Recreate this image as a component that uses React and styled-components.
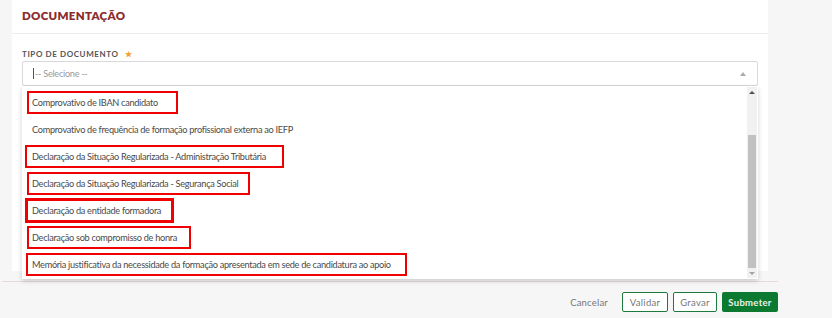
import React from "react";
import styled, { createGlobalStyle } from "styled-components";

const Global = createGlobalStyle`
  html, body { margin: 0; padding: 0; background: #f6f6f6; }
  body { font-family: Lato, "Open Sans", sans-serif; width: 832px; height: 318px; overflow: hidden; }
`;

const Page = styled.div`
  width: 832px;
  height: 318px;
  display: flex;
  flex-direction: column;
  background: #f6f6f6;
`;

const CardRow = styled.div`
  display: flex;
  padding-left: 12px;
`;

const Card = styled.section`
  width: 756px;
  height: 271px;
  background: #fff;
  display: flex;
  flex-direction: column;
`;

const CardHeader = styled.header`
  height: 33px;
  border-bottom: 1px solid #ececec;
  display: flex;
  align-items: center;
  padding-left: 10px;
  box-sizing: content-box;
`;

const Title = styled.h2`
  margin: 0;
  font-size: 11.5px;
  font-weight: 800;
  letter-spacing: 0.3px;
  color: #8a2c2c;
  transform: translateY(-1px);
`;

const CardBody = styled.div`
  padding: 14px 10px 0 10px;
  display: flex;
  flex-direction: column;
`;

const Label = styled.label`
  font-size: 8px;
  font-weight: 700;
  letter-spacing: 0.6px;
  color: #555;
  display: flex;
  align-items: center;
  gap: 6px;
  height: 12px;
  margin-bottom: 1px;
`;

const Star = styled.span`
  color: #f0a12c;
  font-size: 8px;
`;

const SelectWrap = styled.div`
  position: relative;
  width: 736px;
`;

const SelectBox = styled.div`
  height: 23px;
  border: 1px solid #d9d9d9;
  border-radius: 2px;
  display: flex;
  align-items: center;
  padding: 0 10px;
  font-size: 9.2px;
  color: #9a9a9a;
  letter-spacing: -0.3px;
`;

const Caret = styled.span`
  width: 1px;
  height: 11px;
  background: #555;
  margin-right: 1px;
`;

const Arrow = styled.span`
  margin-left: auto;
  width: 0;
  height: 0;
  border-left: 3px solid transparent;
  border-right: 3px solid transparent;
  border-bottom: 4px solid #aaa;
  margin-right: 1px;
`;

const Dropdown = styled.div`
  position: absolute;
  left: 0;
  top: 25px;
  width: 736px;
  height: 193px;
  background: #fff;
  box-shadow: 0 2px 5px rgba(0, 0, 0, 0.18);
  display: flex;
  z-index: 5;
`;

const List = styled.ul`
  list-style: none;
  margin: 0;
  padding: 3px 0 0 0;
  flex: 1;
  display: flex;
  flex-direction: column;
`;

const Item = styled.li`
  height: 27px;
  display: flex;
  align-items: center;
  padding-left: ${(p) => p.$pad}px;
`;

const ItemText = styled.span`
  font-size: 9.2px;
  color: #4a4a4a;
  letter-spacing: -0.3px;
  white-space: nowrap;
  padding: ${(p) => (p.$boxed ? `4px ${p.$right}px 4px ${p.$left}px` : "0")};
  border: ${(p) => (p.$boxed ? `${p.$w}px solid #f00000` : "none")};
  margin-left: ${(p) => (p.$boxed ? `-${p.$left + p.$w}px` : "0")};
`;

const Scrollbar = styled.div`
  width: 10px;
  margin: 1px 1px 1px 0;
  background: #f1f1f1;
  display: flex;
  flex-direction: column;
  align-items: center;
`;

const ScrollBtn = styled.div`
  height: 10px;
  width: 10px;
  display: flex;
  align-items: center;
  justify-content: center;
`;

const UpTri = styled.span`
  border-left: 3px solid transparent;
  border-right: 3px solid transparent;
  border-bottom: 3px solid #505050;
`;

const DownTri = styled.span`
  border-left: 3px solid transparent;
  border-right: 3px solid transparent;
  border-top: 3px solid #a3a3a3;
`;

const Track = styled.div`
  flex: 1;
  width: 10px;
  display: flex;
  flex-direction: column;
  justify-content: flex-end;
`;

const Thumb = styled.div`
  width: 8px;
  margin: 0 auto;
  height: 133px;
  background: #c1c1c1;
`;

const Footer = styled.footer`
  margin-top: 10px;
  width: 776px;
  margin-left: 2px;
  border-top: 1px solid #e6d9d9;
  display: flex;
  justify-content: flex-end;
  align-items: center;
  gap: 5px;
  padding-top: 10px;
`;

const TextBtn = styled.button`
  border: none;
  background: none;
  font-family: inherit;
  font-size: 9.5px;
  color: #777;
  padding: 0 8px;
  height: 20px;
  letter-spacing: 0.2px;
  margin-right: 1px;
`;

const OutlineBtn = styled.button`
  height: 20px;
  width: ${(p) => p.$w}px;
  border: 1px solid #1e7a3c;
  border-radius: 2px;
  background: #fff;
  font-family: inherit;
  font-size: 9.5px;
  color: #777;
  letter-spacing: 0.3px;
  padding: 0;
`;

const PrimaryBtn = styled.button`
  height: 20px;
  width: 56px;
  border: none;
  border-radius: 2px;
  background: #0b7a30;
  font-family: inherit;
  font-size: 9.5px;
  font-weight: 700;
  color: #eaf3ec;
  letter-spacing: 0.3px;
  padding: 0;
`;

const items = [
  { t: "Comprovativo de IBAN candidato", boxed: true, w: 2, left: 3, right: 18 },
  { t: "Comprovativo de frequência de formação profissional externa ao IEFP", boxed: false },
  { t: "Declaração da Situação Regularizada - Administração Tributária", boxed: true, w: 2, left: 5, right: 16 },
  { t: "Declaração da Situação Regularizada - Segurança Social", boxed: true, w: 2, left: 3, right: 10 },
  { t: "Declaração da entidade formadora", boxed: true, w: 3, left: 4, right: 10 },
  { t: "Declaração sob compromisso de honra", boxed: true, w: 2, left: 3, right: 12 },
  { t: "Memória justificativa da necessidade da formação apresentada em sede de candidatura ao apoio", boxed: true, w: 2, left: 4, right: 14 },
];

export default function App() {
  return (
    <Page>
      <Global />
      <CardRow>
        <Card>
          <CardHeader>
            <Title>DOCUMENTAÇÃO</Title>
          </CardHeader>
          <CardBody>
            <Label>
              TIPO DE DOCUMENTO <Star>★</Star>
            </Label>
            <SelectWrap>
              <SelectBox>
                <Caret />
                -- Selecione --
                <Arrow />
              </SelectBox>
              <Dropdown>
                <List>
                  {items.map((it) => (
                    <Item key={it.t} $pad={10}>
                      <ItemText
                        $boxed={it.boxed}
                        $w={it.w}
                        $left={it.left}
                        $right={it.right}
                      >
                        {it.t}
                      </ItemText>
                    </Item>
                  ))}
                </List>
                <Scrollbar>
                  <ScrollBtn>
                    <UpTri />
                  </ScrollBtn>
                  <Track>
                    <Thumb />
                  </Track>
                  <ScrollBtn>
                    <DownTri />
                  </ScrollBtn>
                </Scrollbar>
              </Dropdown>
            </SelectWrap>
          </CardBody>
        </Card>
      </CardRow>
      <Footer>
        <TextBtn>Cancelar</TextBtn>
        <OutlineBtn $w={46}>Validar</OutlineBtn>
        <OutlineBtn $w={44}>Gravar</OutlineBtn>
        <PrimaryBtn>Submeter</PrimaryBtn>
      </Footer>
    </Page>
  );
}
